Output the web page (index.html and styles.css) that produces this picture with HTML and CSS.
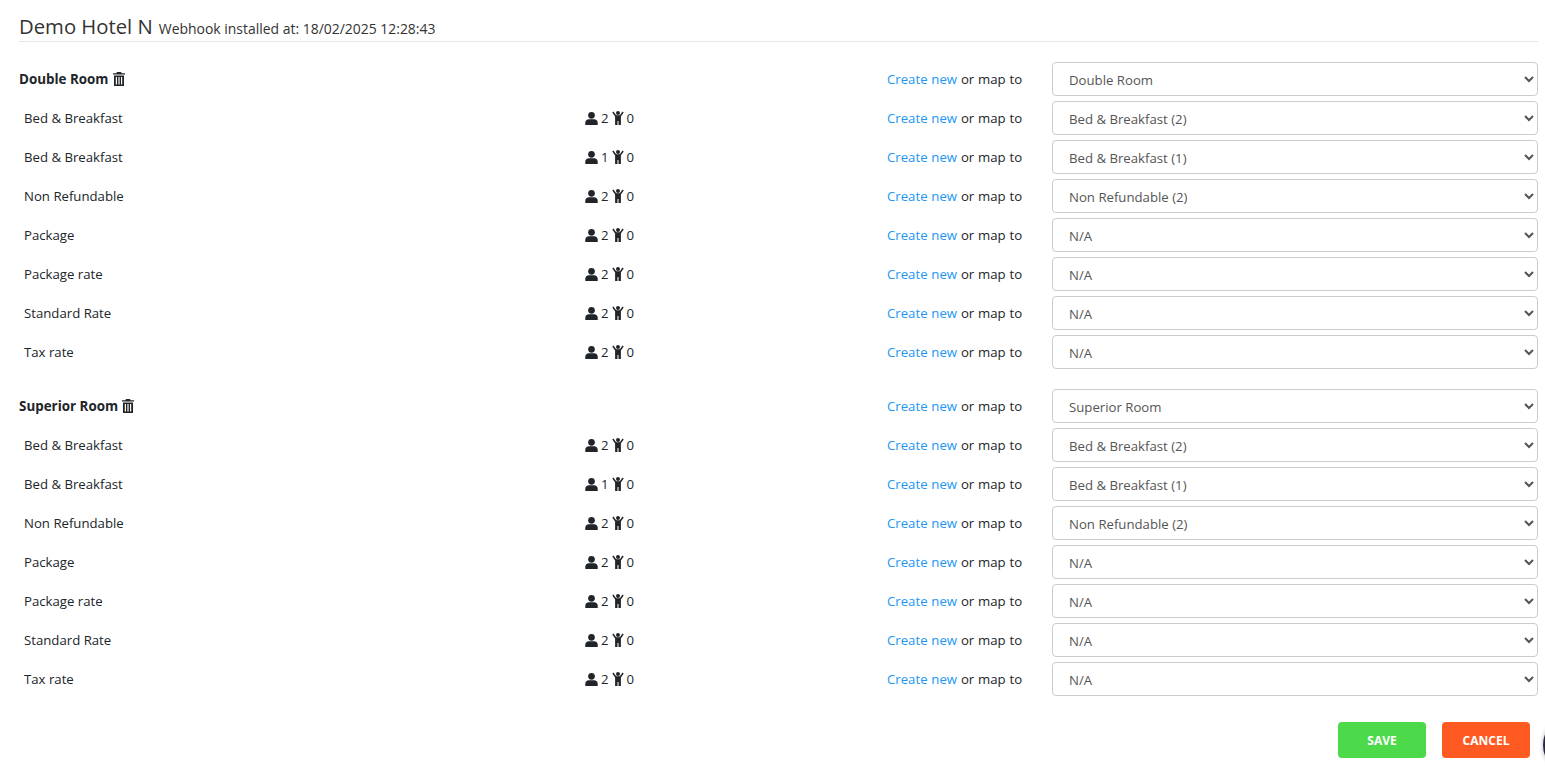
FILE: index.html
```html
<!DOCTYPE html>
<html lang="en">
<head>
    <meta charset="UTF-8">
    <meta name="viewport" content="width=device-width, initial-scale=1.0">
    <title>Demo Hotel N</title>
    <link rel="stylesheet" href="styles.css">
</head>
<body>
    <svg class="icon-defs" width="0" height="0">
        <symbol id="icon-user" viewBox="0 0 14 14">
            <circle cx="7" cy="3.6" r="3.6"/>
            <path d="M0.3 14V11.6C0.3 9.3 2.1 7.8 4 7.8H10C11.9 7.8 13.7 9.3 13.7 11.6V14Z"/>
        </symbol>
        <symbol id="icon-child" viewBox="0 0 12 14">
            <circle cx="6" cy="2" r="2"/>
            <path d="M0.3 1.4L1.5 0.5L3.6 3.6C3.9 4 4.2 4.2 4.7 4.2H7.3C7.8 4.2 8.1 4 8.4 3.6L10.5 0.5L11.7 1.4L8.9 5.6V14H6.5V10H5.5V14H3.1V5.6Z"/>
        </symbol>
        <symbol id="icon-trash" viewBox="0 0 12 14">
            <path d="M4 0H8L8.6 1.2H12V2.6H0V1.2H3.4Z"/>
            <path fill-rule="evenodd" d="M1 3.4H11V14H1ZM2.8 5V12.4H4V5ZM5.4 5V12.4H6.6V5ZM8 5V12.4H9.2V5Z"/>
        </symbol>
    </svg>

    <div class="container">
        <header class="page-title">
            <h1>Demo Hotel N</h1>
            <span class="webhook">Webhook installed at: 18/02/2025 12:28:43</span>
        </header>

        <div id="rooms"></div>

        <div class="actions">
            <button class="btn btn-save">SAVE</button>
            <button class="btn btn-cancel">CANCEL</button>
        </div>
    </div>

    <div class="chat-bubble"></div>

    <script>
        const rates = [
            ['Bed & Breakfast', 2, 'Bed & Breakfast (2)'],
            ['Bed & Breakfast', 1, 'Bed & Breakfast (1)'],
            ['Non Refundable', 2, 'Non Refundable (2)'],
            ['Package', 2, 'N/A'],
            ['Package rate', 2, 'N/A'],
            ['Standard Rate', 2, 'N/A'],
            ['Tax rate', 2, 'N/A']
        ];

        function mapCells(selected) {
            return `<div class="map-label"><a href="#">Create new</a> or map to</div>
                <select class="map-select"><option>${selected.replace('&', '&amp;')}</option></select>`;
        }

        function roomBlock(name) {
            let html = `<section class="room"><div class="row room-row">
                <div class="room-name">${name} <svg class="icon icon-trash"><use href="#icon-trash"/></svg></div>
                <div></div>
                ${mapCells(name)}
            </div>`;
            rates.forEach(rate => {
                html += `<div class="row">
                    <div class="rate-name">${rate[0].replace('&', '&amp;')}</div>
                    <div class="occupancy">
                        <svg class="icon icon-user"><use href="#icon-user"/></svg><span>${rate[1]}</span>
                        <svg class="icon icon-child"><use href="#icon-child"/></svg><span>0</span>
                    </div>
                    ${mapCells(rate[2])}
                </div>`;
            });
            return html + '</section>';
        }

        document.getElementById('rooms').innerHTML = roomBlock('Double Room') + roomBlock('Superior Room');
    </script>
</body>
</html>
```

FILE: styles.css
```css
html, body {
    height: 772px;
    overflow: hidden;
}
body {
    font-family: 'Open Sans', sans-serif;
    font-size: 13.2px;
    margin: 0;
    padding: 0;
    background-color: #fff;
    color: #212529;
}
.icon-defs {
    position: absolute;
}
.container {
    padding: 0 7px 0 19px;
}
.page-title {
    display: flex;
    align-items: baseline;
    gap: 6px;
    height: 42px;
    box-sizing: border-box;
    padding-top: 12px;
    border-bottom: 1px solid #e6e6e6;
    margin-bottom: 20px;
}
.page-title h1 {
    margin: 0;
    font-size: 20.3px;
    font-weight: 400;
    line-height: 28px;
    color: #333;
}
.webhook {
    font-size: 13.95px;
    color: #333;
}
.room {
    margin-bottom: 20px;
}
.row {
    display: grid;
    grid-template-columns: 566px 302px 165px 486px;
    align-items: center;
    height: 34px;
    margin-bottom: 5px;
}
.room-name {
    font-weight: 700;
    font-size: 13.4px;
    display: flex;
    align-items: center;
    gap: 4px;
}
.rate-name {
    padding-left: 5px;
}
.occupancy {
    display: flex;
    align-items: center;
}
.occupancy span {
    margin-left: 3px;
}
.icon {
    fill: #212529;
    display: block;
}
.icon-user {
    width: 13px;
    height: 13px;
}
.icon-child {
    width: 12px;
    height: 14px;
    margin-left: 3px;
}
.icon-trash {
    width: 12px;
    height: 14px;
}
.map-label {
    word-spacing: 0.4px;
}
.map-label a {
    color: #2196f3;
    text-decoration: none;
}
.map-select {
    width: 100%;
    height: 34px;
    padding: 2px 12px 0;
    font-family: inherit;
    font-size: 13.2px;
    color: #555;
    background-color: #fff;
    border: 1px solid #ccc;
    border-radius: 4px;
}
.actions {
    display: flex;
    justify-content: flex-end;
    gap: 16px;
    padding-right: 8px;
    margin-top: 26px;
}
.btn {
    width: 88px;
    height: 36px;
    border: none;
    border-radius: 4px;
    color: #fff;
    font-family: inherit;
    font-size: 12px;
    font-weight: 700;
    cursor: pointer;
}
.btn-save {
    background-color: #4cd94a;
}
.btn-cancel {
    background-color: #ff5a22;
}
/* chat widget, mostly off screen */
.chat-bubble {
    position: fixed;
    left: 1543px;
    top: 715px;
    width: 60px;
    height: 60px;
    border-radius: 50%;
    background-color: #2b2440;
    box-shadow: 0 0 4px rgba(0, 0, 0, 0.3);
}
```
